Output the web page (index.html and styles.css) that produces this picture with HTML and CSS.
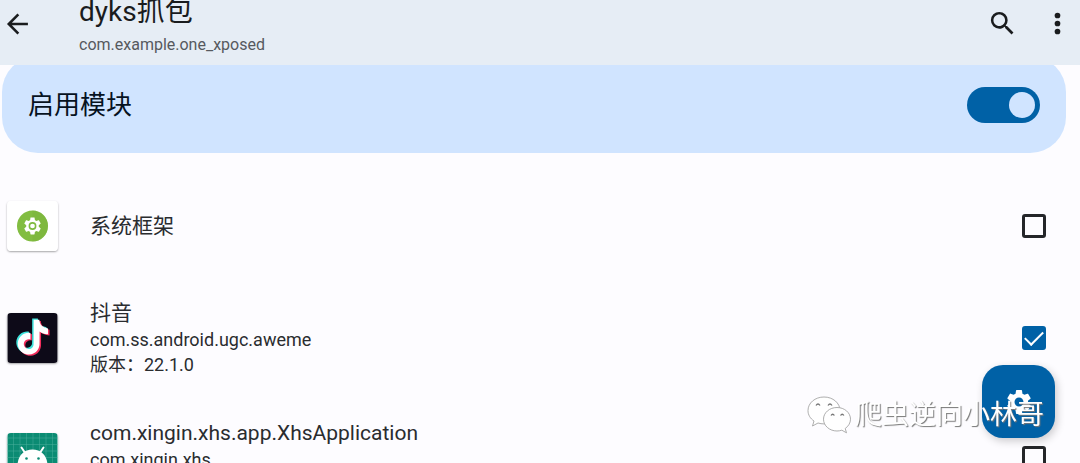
FILE: index.html
```html
<!DOCTYPE html>
<html lang="zh-CN">
<head>
<meta charset="utf-8">
<meta name="viewport" content="width=device-width, initial-scale=1">
<title>dyks抓包</title>
<link rel="stylesheet" href="styles.css">
</head>
<body>
<header class="app-bar">
  <button class="icon-button back" aria-label="返回">
    <svg viewBox="0 0 24 24" width="28" height="28"><path fill="none" stroke="currentColor" stroke-width="2.2" d="M20.5 12H4.500M12.300 3.800L4.100 12l8.200 8.200"/></svg>
  </button>
  <div class="heading">
    <h1 class="title">dyks抓包</h1>
    <p class="subtitle">com.example.one_xposed</p>
  </div>
  <button class="icon-button" aria-label="搜索">
    <svg viewBox="0 0 24 24" width="31" height="31"><path fill="currentColor" d="M15.500 14h-.79l-.28-.27A6.470 6.470 0 0 0 16 9.500 6.500 6.500 0 1 0 9.500 16c1.610 0 3.090-.59 4.230-1.570l.27.28v.79l5 4.990L20.490 19l-4.990-5zm-6 0C7.010 14 5 11.990 5 9.500S7.010 5 9.500 5 14 7.010 14 9.500 11.990 14 9.500 14z"/></svg>
  </button>
  <button class="icon-button" aria-label="更多选项">
    <svg viewBox="0 0 24 24" width="31" height="31"><g fill="currentColor"><circle cx="12" cy="5.800" r="2.200"/><circle cx="12" cy="12" r="2.200"/><circle cx="12" cy="18.200" r="2.200"/></g></svg>
  </button>
</header>

<main class="content">
  <label class="module-card">
    <span>启用模块</span>
    <input class="switch" type="checkbox" role="switch" checked>
  </label>

  <ul class="apps">
    <li>
      <label class="app">
        <svg class="app-icon" viewBox="0 0 50 50"><rect width="50" height="50" fill="#fff"/><circle cx="25" cy="25" r="15.500" fill="#82bd41"/><path d="M25 9.500a15.500 15.500 0 0 1 0 31z" fill="#79b23a" opacity=".4"/><g transform="translate(14.500 14.500) scale(.875)"><path fill="#fff" d="M19.140 12.940c.04-.3.06-.61.06-.94 0-.32-.02-.64-.07-.94l2.030-1.580c.18-.14.23-.41.12-.61l-1.920-3.320c-.12-.22-.37-.29-.59-.22l-2.390.96c-.5-.38-1.030-.7-1.620-.94l-.36-2.540c-.04-.24-.24-.41-.48-.41h-3.840c-.24 0-.43.17-.47.41l-.36 2.540c-.59.24-1.130.57-1.620.94l-2.390-.96c-.22-.08-.47 0-.59.22L2.740 8.870c-.12.21-.08.47.12.61l2.030 1.580c-.05.3-.09.63-.09.94s.02.64.07.94l-2.030 1.580c-.18.14-.23.41-.12.61l1.920 3.320c.12.22.37.29.59.22l2.390-.96c.5.38 1.030.7 1.620.94l.36 2.540c.05.24.24.41.48.41h3.840c.24 0 .44-.17.47-.41l.36-2.540c.59-.24 1.130-.56 1.620-.94l2.390.96c.22.08.47 0 .59-.22l1.920-3.320c.12-.22.07-.47-.12-.61z"/><circle cx="12" cy="12" r="3.600" fill="#fff" stroke="#7fba40" stroke-width="1.800"/></g></svg>
        <span class="app-text"><span class="app-name">系统框架</span></span>
        <input class="check" type="checkbox">
      </label>
    </li>
    <li>
      <label class="app">
        <svg class="app-icon" viewBox="0 0 50 50">
          <defs><path id="note" d="M12.525.02c1.310-.02 2.610-.01 3.910-.02.08 1.530.63 3.090 1.750 4.170 1.120 1.110 2.700 1.620 4.240 1.790v4.030c-1.440-.05-2.890-.35-4.200-.97-.57-.26-1.100-.59-1.620-.93-.01 2.920.01 5.840-.02 8.750-.08 1.400-.54 2.790-1.350 3.940-1.310 1.920-3.580 3.170-5.910 3.210-1.430.08-2.860-.31-4.080-1.030-2.020-1.190-3.440-3.370-3.650-5.710-.02-.5-.03-1-.01-1.490.18-1.900 1.120-3.720 2.580-4.960 1.660-1.440 3.980-2.130 6.150-1.720.02 1.480-.04 2.960-.04 4.440-.99-.32-2.150-.23-3.020.37-.63.41-1.110 1.040-1.360 1.750-.21.51-.15 1.070-.14 1.610.24 1.640 1.820 3.020 3.500 2.870 1.120-.01 2.190-.66 2.770-1.610.19-.33.4-.67.41-1.060.1-1.790.06-3.570.07-5.360.01-4.030-.01-8.050.02-12.070z"/></defs>
          <rect width="50" height="50" fill="#0d0a18"/>
          <use href="#note" transform="translate(6.500 5.500) scale(1.450)" fill="#3fe3dc"/>
          <use href="#note" transform="translate(9.500 8) scale(1.450)" fill="#f32d5c"/>
          <use href="#note" transform="translate(8 6.800) scale(1.450)" fill="#fff"/>
        </svg>
        <span class="app-text detailed">
          <span class="app-name">抖音</span>
          <span class="app-detail">com.ss.android.ugc.aweme</span>
          <span class="app-detail">版本：22.1.0</span>
        </span>
        <input class="check" type="checkbox" checked>
      </label>
    </li>
    <li>
      <label class="app">
        <svg class="app-icon" viewBox="0 0 50 50">
          <rect width="50" height="50" fill="#0b8b73"/>
          <path d="M6 0v50M12.500 0v50M19 0v50M25.500 0v50M32 0v50M38.500 0v50M45 0v50M0 5h50M0 11.500h50M0 18h50M0 24.500h50M0 31h50M0 37.500h50M0 44h50" stroke="#4aaf9d" stroke-width=".5"/>
          <path d="M14 14.500l4 6M36 14.500l-4 6" stroke="#fff" stroke-width="2" stroke-linecap="round"/>
          <path d="M10 33c0-10 6-16.500 15-16.500s15 6.500 15 16.500z" fill="#fff"/>
          <circle cx="19" cy="25.500" r="1.300" fill="#0b8b73"/><circle cx="31" cy="25.500" r="1.300" fill="#0b8b73"/>
        </svg>
        <span class="app-text detailed">
          <span class="app-name">com.xingin.xhs.app.XhsApplication</span>
          <span class="app-detail">com.xingin.xhs</span>
        </span>
        <input class="check" type="checkbox">
      </label>
    </li>
  </ul>
</main>

<button class="fab" aria-label="设置">
  <svg viewBox="0 0 24 24" width="30" height="30"><path fill="currentColor" d="M19.140 12.940c.04-.3.06-.61.06-.94 0-.32-.02-.64-.07-.94l2.030-1.580c.18-.14.23-.41.12-.61l-1.920-3.320c-.12-.22-.37-.29-.59-.22l-2.390.96c-.5-.38-1.030-.7-1.620-.94l-.36-2.540c-.04-.24-.24-.41-.48-.41h-3.840c-.24 0-.43.17-.47.41l-.36 2.540c-.59.24-1.130.57-1.620.94l-2.390-.96c-.22-.08-.47 0-.59.22L2.740 8.870c-.12.21-.08.47.12.61l2.030 1.580c-.05.3-.09.63-.09.94s.02.64.07.94l-2.030 1.580c-.18.14-.23.41-.12.61l1.920 3.320c.12.22.37.29.59.22l2.390-.96c.5.38 1.030.7 1.620.94l.36 2.540c.05.24.24.41.48.41h3.840c.24 0 .44-.17.47-.41l.36-2.540c.59-.24 1.130-.56 1.620-.94l2.390.96c.22.08.47 0 .59-.22l1.920-3.320c.12-.22.07-.47-.12-.61l-2.010-1.580zM12 15.600c-1.980 0-3.600-1.620-3.600-3.600s1.620-3.600 3.600-3.600 3.600 1.620 3.600 3.600-1.620 3.600-3.600 3.600z"/></svg>
</button>

<div class="watermark">
  <svg viewBox="0 0 44 38" width="44" height="38">
    <g fill="#fff" stroke="#999" stroke-width=".8">
      <path d="M17 1C8 1 1 7 1 14.500c0 4.500 2.300 8 6 10.500l-1.500 5 5.500-3c2 .6 4 .9 6 .9 9 0 16-6 16-13.400S26 1 17 1z"/>
      <path d="M30 11.500c-7.500 0-13.500 5.200-13.500 11.700S22.500 35 30 35c1.700 0 3.300-.3 4.800-.8l4.700 2.600-1.300-4.300c3.200-2.300 5.300-5.500 5.300-9.300 0-6.500-6-11.700-13.500-11.700z"/>
    </g>
    <g fill="none" stroke="#777" stroke-width="1.300"><path d="M9 9.500q2-3 4 0M21 9.500q2-3 4 0M24 19.500q1.700-2.500 3.400 0M33.500 19.500q1.700-2.500 3.400 0"/></g>
  </svg>
  <span>爬虫逆向小林哥</span>
</div>
</body>
</html>
```
FILE: styles.css
```css
* {
  box-sizing: border-box;
}

body {
  margin: 0;
  height: 100vh;
  overflow: hidden;
  background: #fdfcff;
  color: #1a1c1e;
  font-family: Roboto, "Noto Sans CJK SC", sans-serif;
}

.app-bar {
  position: relative;
  z-index: 1;
  display: flex;
  align-items: center;
  height: 65px;
  padding-bottom: 18px;
  padding-right: 7px;
  background: #e6edf5;
}

.icon-button {
  display: grid;
  place-items: center;
  width: 32px;
  height: 48px;
  margin-left: 23px;
  padding: 0;
  border: 0;
  background: none;
  color: #1a1c1e;
}

.icon-button.back {
  margin-left: 2px;
}

.heading {
  flex: 1;
  padding-top: 2px;
  padding-left: 45px;
}

.title,
.subtitle {
  margin: 0;
  font-weight: 400;
}

.title {
  font-size: 28px;
  line-height: 40px;
}

.subtitle {
  color: #56595e;
  font-size: 16px;
  line-height: 25px;
}

.module-card {
  display: flex;
  align-items: center;
  justify-content: space-between;
  height: 97px;
  margin: -9px 14px 0 2px;
  padding: 0 26px;
  border-radius: 36px;
  background: #d0e4ff;
  color: #06121f;
  font-size: 26px;
  line-height: 38px;
}

.switch {
  display: flex;
  align-items: center;
  justify-content: flex-end;
  width: 73px;
  height: 36px;
  margin: 0;
  padding: 5px;
  appearance: none;
  border-radius: 18px;
  background: #0061a6;
}

.switch::after {
  width: 26px;
  height: 26px;
  border-radius: 50%;
  background: #d0e4ff;
  content: "";
}

.apps {
  margin: 0;
  padding: 21px 0 0;
  list-style: none;
}

.app {
  display: flex;
  align-items: center;
  min-height: 104px;
  padding: 21px 34px 21px 7px;
}

.app-icon {
  flex: none;
  width: 51px;
  height: 50px;
  border-radius: 4px;
  box-shadow: 0 1px 2px rgba(0, 0, 0, 0.35);
}

.app-text {
  display: flex;
  flex: 1;
  flex-direction: column;
  padding-left: 32px;
  color: #2a2c2f;
}

.app-text.detailed {
  min-height: 78px;
}

.app-name {
  font-size: 21px;
  line-height: 28px;
}

.app-detail {
  font-size: 18px;
  line-height: 25px;
}

.check {
  display: grid;
  place-items: center;
  width: 24px;
  height: 24px;
  margin: 0;
  appearance: none;
  border: 3px solid #242629;
  border-radius: 3px;
}

.check:checked {
  border-color: #0061a6;
  background: #0061a6;
}

.check:checked::after {
  width: 16px;
  height: 8px;
  border: solid #fff;
  border-width: 0 0 2px 2px;
  transform: translateY(-2px) rotate(-45deg);
  content: "";
}

.fab {
  position: fixed;
  right: 25px;
  bottom: 25px;
  display: grid;
  place-items: center;
  width: 73px;
  height: 73px;
  padding: 0;
  border: 0;
  border-radius: 21px;
  background: #0061a6;
  box-shadow: 2px 3px 8px rgba(0, 0, 0, 0.2);
  color: #fff;
}

.watermark {
  position: fixed;
  right: 36px;
  bottom: 28px;
  display: flex;
  align-items: center;
  gap: 4px;
  color: #fff;
  font-size: 27px;
  line-height: 40px;
  text-shadow: 1px 1px 1px #777;
}
```
